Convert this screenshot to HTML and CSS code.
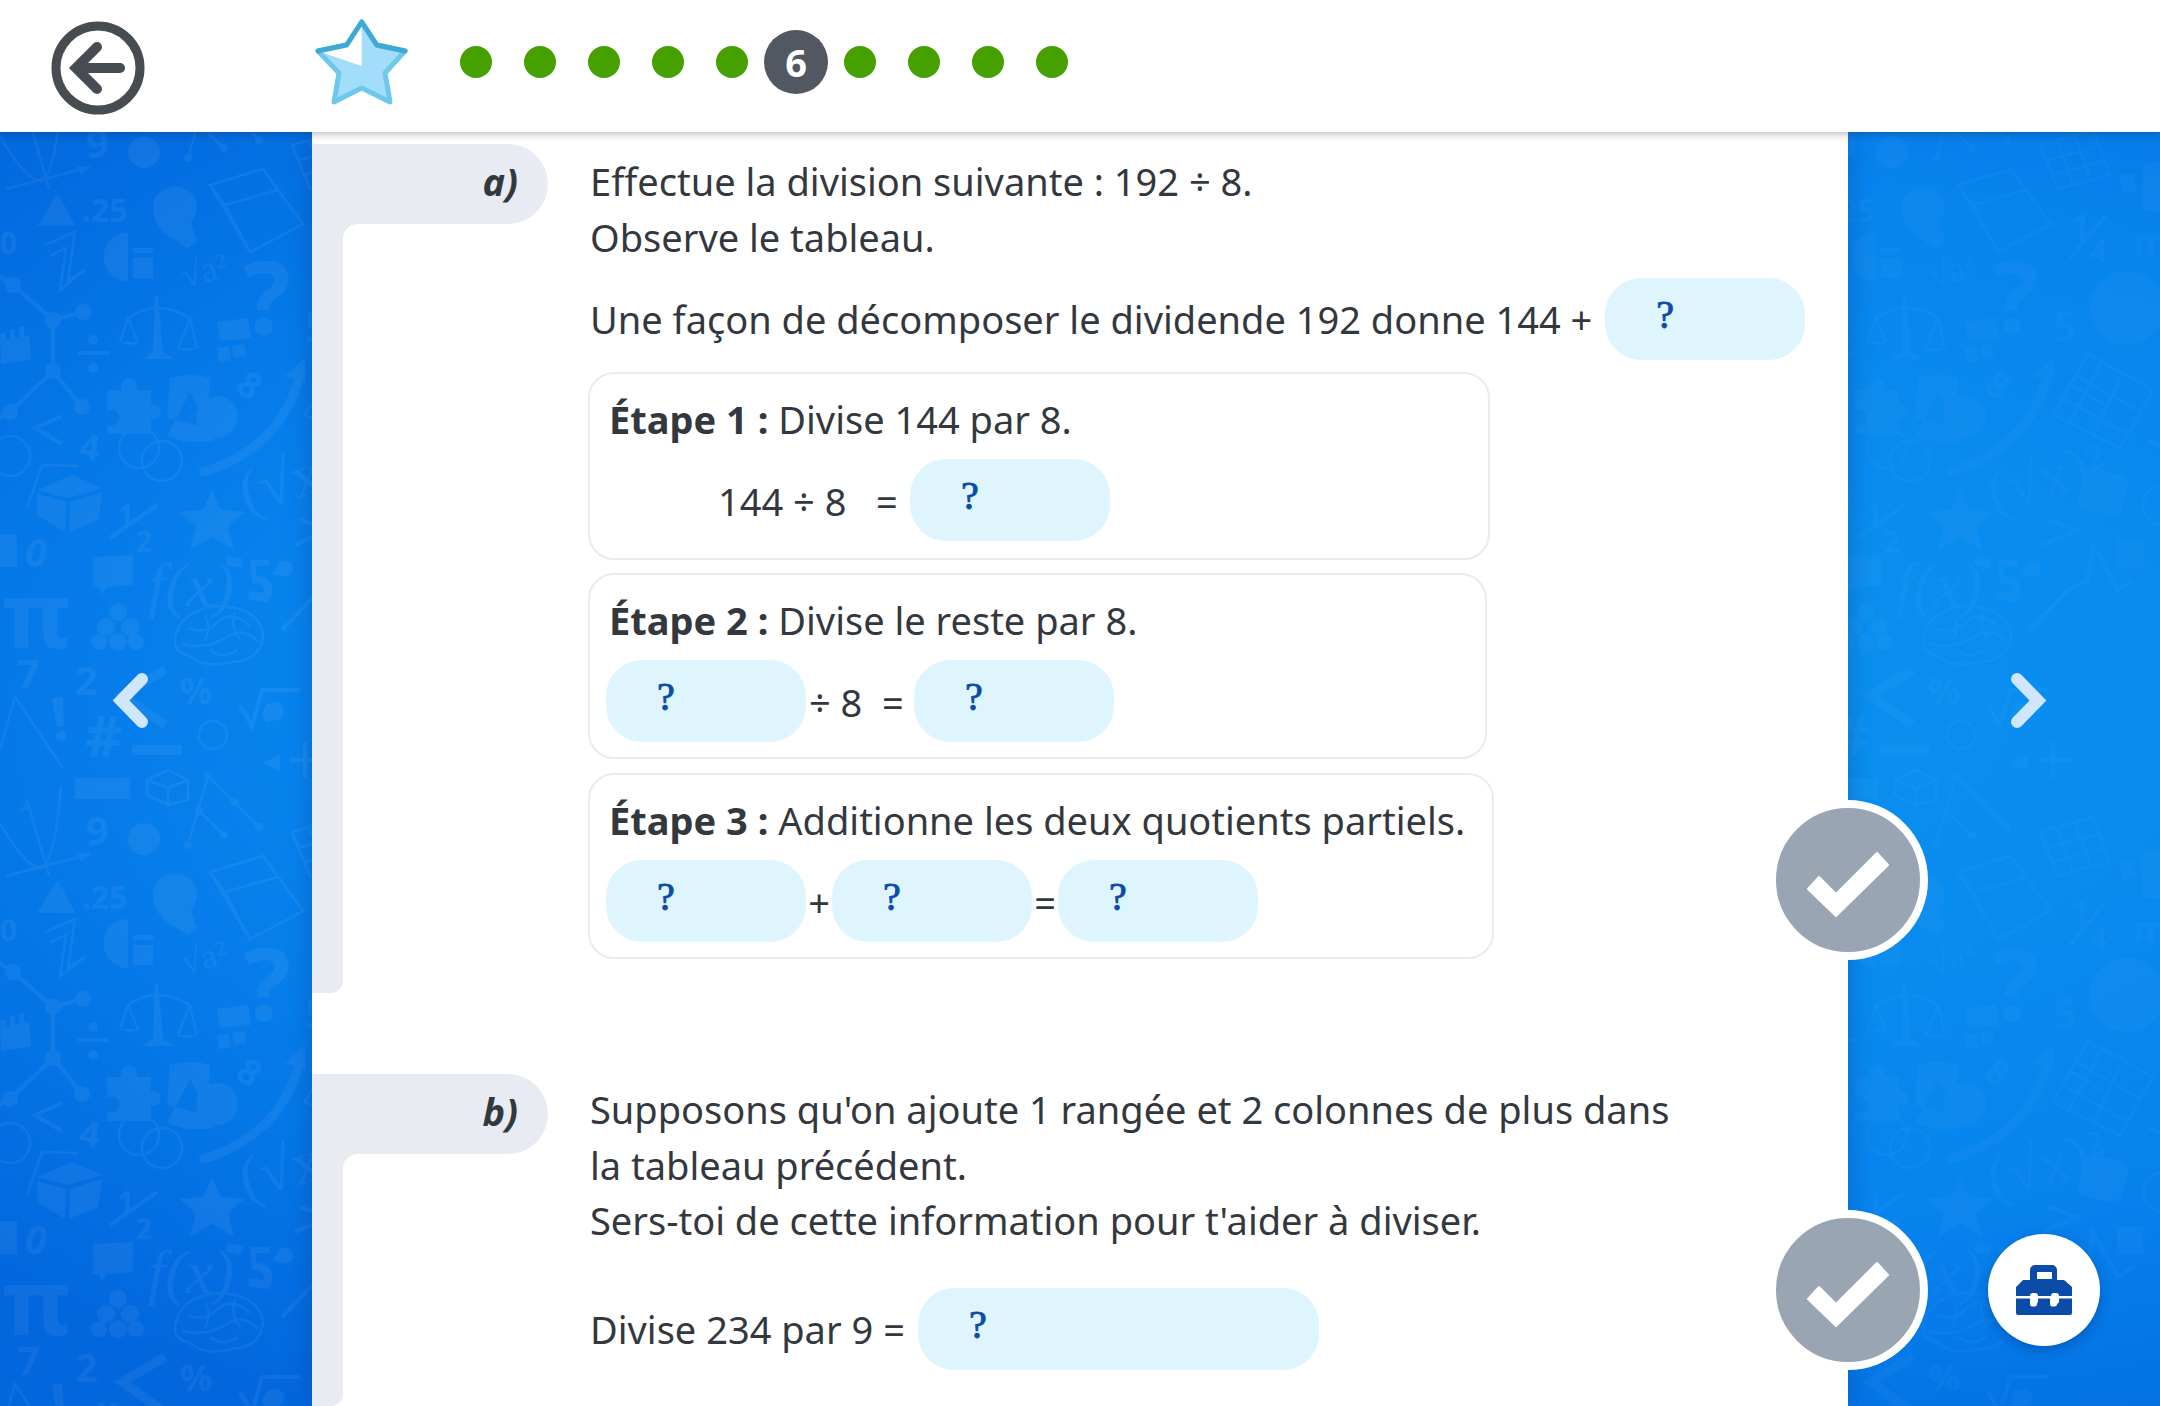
FILE: index.html
```html
<!DOCTYPE html>
<html lang="fr">
<head>
<meta charset="utf-8">
<title>Division</title>
<link rel="stylesheet" href="styles.css">
</head>
<body>
<div class="stage">
  <svg class="wallpaper" width="2160" height="1406" viewBox="0 0 2160 1406" aria-hidden="true">
    <defs>
      <g id="tile">
        <!-- graph and axes -->
        <path class="ln" d="M6 189L90 167M49 189L27 112M0 136Q25 180 41 181Q55 175 61 99"/>
        <path class="sh" d="M90 167l-14-2 5 10zM27 112l-6 12 10-2z"/>
        <text class="nb" x="86" y="158" font-size="40">9</text>
        <circle class="sh" cx="144" cy="152" r="16"/>
        <g class="ln"><path d="M208 89L188 158M208 89L259 140M199 124L224 148"/></g>
        <g class="sh"><circle cx="208" cy="89" r="4"/><circle cx="235" cy="116" r="4"/><circle cx="259" cy="140" r="4"/><circle cx="199" cy="124" r="4"/><circle cx="188" cy="158" r="4"/><circle cx="224" cy="148" r="4"/></g>
        <path class="sh" d="M37 226L75 226L58 193Z"/>
        <text class="nb" x="82" y="222" font-size="32">.25</text>
        <path class="sh" d="M153 208a22 21 0 1 1 38 14l6 20-10 6-12-8q-22-12-22-32z"/>
        <path class="ln" d="M210 185L263 169L303 224L250 252ZM210 185L225 205L250 252M225 205L278 190L263 169M278 190L303 224M225 205L250 252"/>
        <path class="sh" d="M128 232a24 24 0 0 0 0 49zM133 248h20v5h-20zM133 258h20v20h-20z"/>
        <text class="th" x="185" y="288" font-size="36" transform="rotate(-15 185 288)">√a²</text>
        <path class="ln" d="M45 245L75 232L68 280L85 270L60 290L66 248L50 256"/>
        <text class="nb" x="0" y="254" font-size="30">0</text>
        <!-- molecule -->
        <g class="lw"><path d="M-10 270L13 285L53 320L83 312M53 320L53 371L10 412L-5 420M53 371L82 407"/></g>
        <g class="sh"><circle cx="13" cy="285" r="8"/><circle cx="53" cy="320" r="8"/><circle cx="83" cy="312" r="8"/><circle cx="53" cy="371" r="8"/><circle cx="10" cy="412" r="8"/><circle cx="82" cy="407" r="8"/></g>
        <path class="sh" d="M0 334l6-2v8l4-1v-9l5-1v9l4-1v-10l5-1v10l5-1 2 24-30 5z"/>
        <path class="sh" d="M78 351h31v4H78z"/>
        <circle class="sh" cx="93" cy="340" r="5"/><circle class="sh" cx="93" cy="368" r="5"/>
        <!-- scale -->
        <path class="ln" d="M128 318Q157 298 190 318M128 318L120 342M128 318L138 342M190 318L178 348M190 318L197 348"/>
        <path class="sh" d="M155 296l3 0 5 56 12 7h-32l10-7zM120 342h20q-10 6-20 0zM176 348h21q-10 6-21 0z"/>
        <text class="nb" x="243" y="334" font-size="100">?</text>
        <path class="sh" d="M217 322l31-4 3 20-31 3zM217 348l12-2 2 14-12 2zM232 346l12-2 2 12-12 2z"/>
        <text class="nb" x="240" y="400" font-size="36" transform="rotate(35 253 385)">8</text>
        <path class="lw wide" d="M200 473Q280 450 300 375"/>
        <path class="sh" d="M305 358l-20 18 20 6z"/>
        <path class="sh" d="M107 390h15a8 8 0 1 1 14 0h15v15a7 7 0 1 1 0 13v16h-44v-10a8 8 0 1 0 0-13z"/>
        <path class="sh" d="M170 378q20-6 40 0l-3 50-40-10zM190 392l-23 44q24 10 48 4z"/>
        <circle class="sh" cx="217" cy="417" r="21"/>
        <path class="lw" d="M62 416L35 428L62 444"/>
        <text class="nb" x="80" y="460" font-size="36" transform="rotate(8 90 445)">4</text>
        <circle class="ln" cx="139" cy="448" r="20"/><circle class="ln" cx="162" cy="461" r="20"/>
        <circle class="ln" cx="10" cy="456" r="20"/>
        <path class="sh" d="M37 490L72 475L102 488L68 498ZM37 494L66 502L65 532L37 515ZM70 502L102 492L98 520L69 532Z"/>
        <path class="ln" d="M27 508L42 465L78 466"/>
        <text class="nb" x="118" y="525" font-size="28">1</text>
        <path class="lw" d="M110 538L157 505"/>
        <text class="nb" x="136" y="552" font-size="28">2</text>
        <path class="sh" d="M212 490l9 20 24 2-17 14 6 24-22-13-22 13 6-24-17-14 24-2z"/>
        <text class="th" x="238" y="505" font-size="60" transform="rotate(-15 270 480)">(√x)²</text>
        <text class="it" x="25" y="567" font-size="40">0</text>
        <path class="sh" d="M0 534h17v33H0z"/>
        <path class="sh" d="M93 557l40-2v30l-26 2-6 8-2-8h-6z"/>
        <text class="th" x="148" y="606" font-size="62" font-style="italic">f(x)</text>
        <path class="sh" d="M227 556l16 3-2 9-15-3zM280 562a8 8 0 1 1 2 14l-10-2zM250 560h20v6h-14v10q14 0 16 10t-4 16l-20-3 2-8 14 2q2-10-12-10z"/>
        <text class="nb" x="2" y="648" font-size="92" font-weight="400">π</text>
        <g class="sh"><circle cx="118" cy="612" r="9"/><circle cx="106" cy="627" r="9"/><circle cx="130" cy="627" r="9"/><circle cx="99" cy="642" r="8"/><circle cx="118" cy="642" r="9"/><circle cx="136" cy="642" r="8"/></g>
        <!-- brain -->
        <path class="ln" d="M175 640Q178 612 215 606Q258 606 263 634Q262 660 232 662Q205 669 190 656Q174 652 175 640ZM188 628Q205 635 218 622T250 626M182 644Q205 650 225 638T258 642M205 615Q212 628 205 640M235 612Q230 628 240 640M210 650Q222 660 238 650"/>
        <!-- bottom row -->
        <text class="nb" x="17" y="688" font-size="40">7</text>
        <text class="nb" x="75" y="695" font-size="40">2</text>
        <text class="nb" x="50" y="740" font-size="60" transform="rotate(-6 60 710)">!</text>
        <text class="nb" x="180" y="704" font-size="36">%</text>
        <path class="lw" d="M240 705L252 726L262 690H300"/>
        <path class="ln" d="M-5 767L15 697L62 767"/>
        <text class="nb" x="85" y="757" font-size="58">#</text>
        <path class="lw wide" d="M165 670L122 695L165 725"/>
        <circle class="ln" cx="213" cy="735" r="14"/>
        <path class="sh" d="M132 745h50v10h-50zM75 778h55v21H75z"/>
        <path class="ln" d="M147 780L168 770L188 780V800L168 805L147 795ZM147 780L168 788L188 780M168 788V805"/>
        <path class="sh" d="M275 702a9 9 0 1 1 0 18l-8 2q-8-6 0-18zM280 755l-18 8 18 8z"/>
        <path class="lw" d="M290 760H325M305 742V778"/>
        <!-- right-hand part of the wallpaper -->
        <path class="ln" d="M292 145L345 130L362 175L310 189ZM309 140L325 184M327 135L343 180M300 160L352 146M305 175L357 160"/>
        <path class="sh" d="M372 175l14-2 2 18-14 2zM395 165l17-3v50l-17-2z"/>
        <text class="nb" x="322" y="240" font-size="36">1</text>
        <path class="lw" d="M322 258L358 215"/>
        <text class="nb" x="342" y="262" font-size="30">4</text>
        <text class="nb" x="385" y="255" font-size="36">m</text>
        <circle class="sh" cx="379" cy="308" r="37"/>
        <text class="nb" x="305" y="342" font-size="42">5</text>
        <path class="ln" d="M305 415L340 354L405 390L372 448ZM315 398L378 434M328 375L392 412M320 383L355 404M352 365L320 425M372 378L345 438"/>
        <rect class="sh" x="333" y="471" width="44" height="42" rx="7" transform="rotate(15 355 492)"/>
        <circle class="ln" cx="415" cy="505" r="20"/>
        <path class="lw" d="M282 630L320 590L340 580L345 545L370 590L385 580"/>
        <path class="sh" d="M369 540h26v27h-26z"/>
        <path class="lw" d="M300 520L330 530L295 545"/>
        <path class="lw" d="M400 440L430 455"/>
      </g>
      <pattern id="maths" patternUnits="userSpaceOnUse" x="0" y="0" width="1748" height="687">
        <use href="#tile"/>
        <use href="#tile" y="687"/>
        <use href="#tile" y="-687"/>
      </pattern>
    </defs>
    <rect class="wp-left" x="0" y="132" width="312" height="1274" fill="url(#maths)"/>
    <rect class="wp-right" x="1848" y="132" width="312" height="1274" fill="url(#maths)"/>
  </svg>

  <header class="topbar">
    <svg class="back" width="96" height="96" viewBox="0 0 96 96">
      <circle cx="48" cy="48" r="42" class="back-ring"/>
      <path d="M70 48H27M47 27L26 48L47 69" class="back-arrow"/>
    </svg>
    <svg class="star" width="120" height="110" viewBox="0 0 120 110">
      <path class="star-fill" d="M61.7 12L76.7 35L105 41L85 63L90 92L61.7 78L34 92L39 63L18 41L46.7 35Z"/>
      <path class="star-glint" d="M20 41.7L46.7 35L61.700 15V56Z"/>
      <path class="star-top" d="M18 41L46.7 35L61.7 12L76.7 35L105 41"/>
    </svg>
    <ol class="steps">
      <li class="step"><span class="dot"></span></li>
      <li class="step"><span class="dot"></span></li>
      <li class="step"><span class="dot"></span></li>
      <li class="step"><span class="dot"></span></li>
      <li class="step"><span class="dot"></span></li>
      <li class="step"><span class="current">6</span></li>
      <li class="step"><span class="dot"></span></li>
      <li class="step"><span class="dot"></span></li>
      <li class="step"><span class="dot"></span></li>
      <li class="step"><span class="dot"></span></li>
    </ol>
  </header>

  <main class="body">
    <aside class="side side-left">
      <svg class="chev" width="45" height="67" viewBox="0 0 45 67"><path d="M36 12L15 33.5L36 55"/></svg>
    </aside>

    <div class="sheet">
      <section class="part part-a">
        <div class="tab"><div class="pill">a)</div><div class="rail"></div></div>
        <div class="content">
          <p class="para">Effectue la division suivante : 192 ÷ 8.<br>Observe le tableau.</p>
          <div class="row row-decomp"><span class="lead">Une façon de décomposer le dividende 192 donne 144 +</span><span class="field">?</span></div>
          <div class="card card-1">
            <p class="card-title"><b>Étape 1 :</b> Divise 144 par 8.</p>
            <div class="eq eq-indent"><span class="eq-a">144 ÷ 8</span><span class="eq-b">=</span><span class="field">?</span></div>
          </div>
          <div class="card card-2">
            <p class="card-title"><b>Étape 2 :</b> Divise le reste par 8.</p>
            <div class="eq"><span class="field">?</span><span class="eq-c">÷ 8</span><span class="eq-d">=</span><span class="field">?</span></div>
          </div>
          <div class="card card-3">
            <p class="card-title"><b>Étape 3 :</b> Additionne les deux quotients partiels.</p>
            <div class="eq"><span class="field">?</span><span class="op">+</span><span class="field">?</span><span class="op">=</span><span class="field">?</span></div>
          </div>
        </div>
        <button class="check check-a" type="button"><svg width="100" height="100" viewBox="-50 -50 100 100"><path d="M-40 9L-29 -3L-12 14L29 -27L40 -15L-12 36Z"/></svg></button>
      </section>

      <section class="part part-b">
        <div class="tab"><div class="pill">b)</div><div class="rail"></div></div>
        <div class="content content-b">
          <p class="para para-b">Supposons qu'on ajoute 1 rangée et 2 colonnes de plus dans<br>la tableau précédent.<br>Sers-toi de cette information pour t'aider à diviser.</p>
          <div class="row row-final"><span class="lead">Divise 234 par 9 =</span><span class="field field-wide">?</span></div>
        </div>
        <button class="check check-b" type="button"><svg width="100" height="100" viewBox="-50 -50 100 100"><path d="M-40 9L-29 -3L-12 14L29 -27L40 -15L-12 36Z"/></svg></button>
      </section>
    </div>

    <aside class="side side-right">
      <svg class="chev" width="45" height="67" viewBox="0 0 45 67"><path d="M9 12L30 33.5L9 55"/></svg>
    </aside>
  </main>

  <button class="tools" type="button">
    <svg width="56" height="50" viewBox="36 35 56 50">
      <path class="tool-body" d="M50 50V40a5 5 0 0 1 5-5h17a5 5 0 0 1 5 5v10h7l8 7v9H36v-9l7-7zM57 42v7h15v-7zM36 68.500h14v5.500a2.500 2.500 0 0 0 2.500 2.500h2a2.500 2.500 0 0 0 2.500-2.500v-5.500h13v5.500a2.500 2.500 0 0 0 2.500 2.500h2a2.500 2.500 0 0 0 2.500-2.500v-5.500h15V83a2 2 0 0 1-2 2H38a2 2 0 0 1-2-2z"/>
      <rect class="tool-latch" x="50" y="63" width="8" height="11" rx="3"/>
      <rect class="tool-latch" x="71" y="63" width="8" height="11" rx="3"/>
    </svg>
  </button>
</div>
</body>
</html>
```
FILE: styles.css
```css
* { box-sizing: border-box; }
html, body { margin: 0; padding: 0; }
body {
  font-family: "Noto Sans", "Open Sans", sans-serif;
  color: #33383f;
  overflow: hidden;
}
.stage {
  position: relative;
  width: 2160px;
  height: 1406px;
  overflow: hidden;
  display: flex;
  flex-direction: column;
  background: radial-gradient(ellipse 2000px 900px at 1500px 700px, #0b94f1 0%, #0784ee 60%, #0266dd 100%);
}
.wallpaper { position: absolute; left: 0; top: 0; }
.wp-left { opacity: .055; }
.wp-right { opacity: .028; }
.sh { fill: #fff; }
.ln { fill: none; stroke: #fff; stroke-width: 2.5; }
.lw { fill: none; stroke: #fff; stroke-width: 4; }
.wide { stroke-width: 9; }
.nb { fill: #fff; font-family: "Noto Sans", sans-serif; font-weight: 700; }
.th { fill: #fff; font-family: "Liberation Serif", serif; }
.it { fill: #fff; font-family: "Noto Sans", sans-serif; font-weight: 700; font-style: italic; }

/* top bar */
.topbar {
  position: relative;
  z-index: 3;
  flex: none;
  height: 132px;
  display: flex;
  align-items: flex-start;
  padding-left: 50px;
  background: #fff;
  box-shadow: 0 2px 8px rgba(20, 30, 50, .3);
}
.back { margin-top: 20px; flex: none; }
.back-ring { fill: none; stroke: #474c53; stroke-width: 9; }
.back-arrow { fill: none; stroke: #474c53; stroke-width: 10; stroke-linecap: round; stroke-linejoin: miter; }
.star { margin: 10px 0 0 154px; flex: none; }
.star-fill { fill: #a2defb; stroke: #6cc8ed; stroke-width: 5; stroke-linejoin: round; }
.star-glint { fill: #fff; }
.star-top { fill: none; stroke: #3fa9d6; stroke-width: 5; stroke-linejoin: round; stroke-linecap: round; }
.steps {
  list-style: none;
  margin: 30px 0 0 24px;
  padding: 0;
  display: flex;
}
.step {
  width: 64px;
  height: 64px;
  display: flex;
  align-items: center;
  justify-content: center;
}
.dot { width: 32px; height: 32px; border-radius: 50%; background: #45a000; }
.current {
  width: 64px;
  height: 64px;
  border-radius: 50%;
  background: #515861;
  color: #fff;
  font-size: 38px;
  font-weight: 700;
  line-height: 64px;
  text-align: center;
}

/* body */
.body { position: relative; flex: 1; display: flex; min-height: 0; }
.side { width: 312px; flex: none; display: flex; align-items: center; padding-bottom: 138px; }
.side-left { padding-left: 106px; }
.side-right { padding-left: 160px; }
.chev path { fill: none; stroke: #cfe6fc; stroke-width: 12; stroke-linecap: round; stroke-linejoin: miter; }
.sheet {
  position: relative;
  z-index: 1;
  width: 1536px;
  flex: none;
  background: #fff;
  padding-top: 12px;
  box-shadow: 0 0 24px rgba(0, 30, 90, .28);
}
.part { position: relative; display: flex; }
.part-a { height: 849px; margin-bottom: 81px; }
.part-b { height: 332px; }
.tab { width: 278px; flex: none; display: flex; flex-direction: column; }
.pill {
  position: relative;
  width: 236px;
  height: 80px;
  flex: none;
  border-radius: 0 40px 40px 0;
  background: #e8ebf2;
  padding-right: 30px;
  font-size: 38px;
  font-weight: 700;
  font-style: italic;
  line-height: 74px;
  text-align: right;
}
.pill::after {
  content: "";
  position: absolute;
  left: 31px;
  top: 80px;
  width: 14px;
  height: 14px;
  background: radial-gradient(circle at 100% 100%, transparent 13.500px, #e8ebf2 14px);
}
.rail { width: 31px; flex: 1; background: #e8ebf2; border-radius: 0 0 12px 0; }
.content { padding-top: 9px; }
.content-b { padding-top: 8px; }
.para { margin: 0; font-size: 38px; line-height: 56px; }
.para-b { line-height: 55.5px; }
.row { display: flex; align-items: center; font-size: 38px; }
.row-decomp { margin-top: 13px; }
.row-final { margin-top: 39.500px; }
.lead { margin-right: 13px; }
.field {
  flex: none;
  width: 200px;
  height: 82px;
  border-radius: 36px;
  background: #dff5fe;
  color: #0a4ca8;
  font-family: "Liberation Serif", serif;
  font-weight: 400;
  font-size: 40px;
  line-height: 74px;
  padding-left: 51px;
  -webkit-text-stroke: .9px #0a4ca8;
}
.field-wide { width: 401px; }
.card {
  height: 186px;
  margin: 0 0 14px -2px;
  border: 2px solid #e8ebf2;
  border-radius: 26px;
  padding: 17px 0 0 19px;
  background: #fff;
}
.row-decomp + .card { margin-top: 12px; height: 188px; margin-bottom: 13px; }
.card-1 { width: 902px; }
.card-2 { width: 899px; }
.card-3 { width: 906px; }
.card-title { margin: 0; font-size: 38px; line-height: 56px; }
.eq { display: flex; align-items: center; margin: 12px 0 0 -3px; font-size: 38px; line-height: 56px; }
.eq-indent { margin-left: 109px; }
.eq-a, .eq-b, .eq-c, .eq-d, .op { padding-top: 2px; }
.eq-a { width: 158px; }
.eq-b { width: 34px; }
.eq-c { width: 76px; padding-left: 3px; }
.eq-d { width: 32px; }
.op { width: 26px; text-align: center; }

/* round buttons */
.check {
  position: absolute;
  right: -80px;
  width: 160px;
  height: 160px;
  padding: 0;
  border: 8px solid #fff;
  border-radius: 50%;
  background: #9aa5b3;
  display: flex;
  align-items: center;
  justify-content: center;
}
.check path { fill: #fff; stroke: #fff; stroke-width: 2; stroke-linejoin: round; }
.check-a { top: 656px; }
.check-b { top: 136px; }
.tools {
  position: absolute;
  z-index: 2;
  left: 1988px;
  top: 1234px;
  width: 112px;
  height: 112px;
  padding: 0;
  border: 0;
  border-radius: 50%;
  background: #fff;
  box-shadow: 0 4px 12px rgba(0, 40, 110, .35);
  display: flex;
  align-items: center;
  justify-content: center;
}
.tool-body { fill: #0a4ca8; fill-rule: evenodd; }
.tool-latch { fill: #fff; }
```
